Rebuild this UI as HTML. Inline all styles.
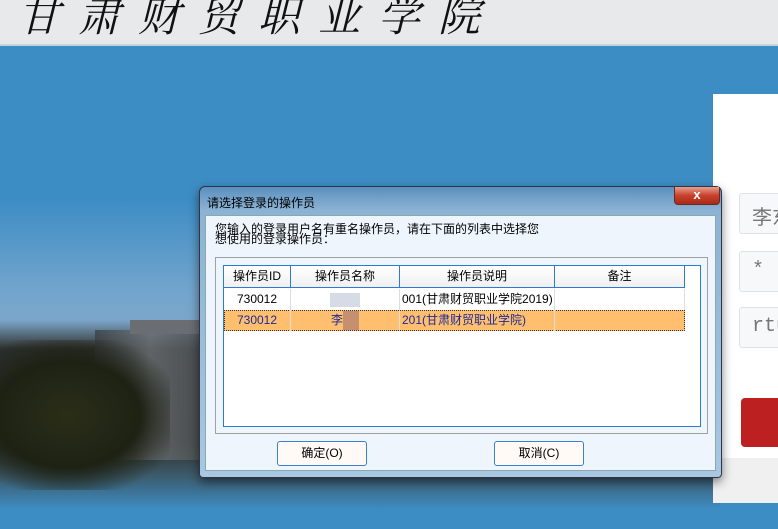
<!DOCTYPE html>
<html><head><meta charset="utf-8"><style>
*{margin:0;padding:0;box-sizing:border-box}
body{width:778px;height:529px;overflow:hidden;position:relative;background:#3d8dc5;font-family:"Liberation Sans","Noto Sans CJK SC","WenQuanYi Zen Hei",sans-serif;font-size:12px;color:#000}
.top{position:absolute;left:0;top:0;width:778px;height:46px;background:#e8e9ea;border-bottom:2px solid #c9d3dc}
.logo{position:absolute;left:18px;top:-16px;font-family:"Noto Serif CJK SC",serif;font-size:42px;letter-spacing:18px;color:#111;font-style:italic;white-space:nowrap}
.sky{position:absolute;left:0;top:200px;width:720px;height:150px;background:linear-gradient(180deg,rgba(61,141,197,0),rgba(150,180,210,.6) 60%,rgba(150,175,200,.8))}
.dark{position:absolute;left:0;top:320px;width:720px;height:190px;background:linear-gradient(180deg,rgba(40,40,38,.0) 0%,rgba(40,40,35,.92) 15%,rgba(45,42,32,.95) 65%,rgba(60,70,70,.7) 82%,rgba(61,141,197,1) 100%)}
.bldg{position:absolute;left:95px;top:330px;width:110px;height:130px;background:linear-gradient(90deg,#3a3e42,#707478 50%,#505458);opacity:.75}
.bldg2{position:absolute;left:130px;top:320px;width:80px;height:14px;background:#6a6e72}
.tree{position:absolute;left:0;top:340px;width:170px;height:150px;background:radial-gradient(ellipse at 40% 50%,#2a2e18,#1e2214 50%,rgba(30,36,24,0) 80%)}
.panel{position:absolute;left:713px;top:94px;width:65px;height:364px;background:#fff}
.panel2{position:absolute;left:713px;top:458px;width:65px;height:45px;background:#f0f0f0}
.inp{position:absolute;left:739px;width:60px;height:41px;border:1px solid #dfe3e8;border-radius:3px;background:#f7f8fa;font-size:20px;color:#777;padding:7px 12px;font-family:"Liberation Mono","Noto Sans CJK SC",monospace;white-space:nowrap;overflow:hidden}
.red{position:absolute;left:741px;top:398px;width:50px;height:49px;background:#bd2020;border-radius:4px}
.dlg{position:absolute;left:199px;top:186px;width:523px;height:292px;border:1px solid #334;border-radius:6px 6px 4px 4px;background:linear-gradient(180deg,#5b8fbf 0%,#8cb3d3 8%,#a8c7e2 100%);box-shadow:0 4px 10px rgba(0,0,0,.5)}
.title{position:absolute;left:7px;top:7px;font-size:12px;color:#000}
.close{position:absolute;left:474px;top:0;width:46px;height:18px;background:linear-gradient(180deg,#e8a090,#c7412c 50%,#a82a18);border:1px solid #6a2a20;border-top:none;border-radius:0 0 4px 4px;color:#fff;font-weight:bold;text-align:center;font-size:13px;line-height:16px}
.body{position:absolute;left:5px;top:28px;width:511px;height:256px;background:#eef5fc;border:1px solid #8aa;}
.msg{position:absolute;left:9px;top:8px;line-height:10px;font-size:12px}
.grp{position:absolute;left:9px;top:41px;width:493px;height:177px;border:1px solid #a0a0a0}
.list{position:absolute;left:7px;top:7px;width:478px;height:162px;border:1px solid #2c7bd2;background:#fff}
.hd{position:absolute;top:0;height:22px;background:linear-gradient(#fff,#f0f0f0);border-right:1px solid #2c7bd2;border-bottom:1px solid #2c7bd2;text-align:center;line-height:21px}
.c{position:absolute;height:21px;line-height:21px;border-right:1px solid #ddd;text-align:center;white-space:nowrap;overflow:hidden}
.sel{position:absolute;left:0;top:44px;width:461px;height:21px;background:#ffbf6e;border:1px dotted #333}
.btn{position:absolute;top:254px;width:90px;height:25px;border:1px solid #3b7fd0;border-radius:3px;background:#fffaf6;text-align:center;line-height:23px}
</style></head><body>
<div class="top"><div class="logo">甘肃财贸职业学院</div></div>
<div class="sky"></div>
<div class="dark"></div>
<div class="bldg"></div><div class="bldg2"></div>
<div class="tree"></div>
<div class="panel"></div><div class="panel2"></div>
<div class="inp" style="top:193px">李东</div>
<div class="inp" style="top:251px">*</div>
<div class="inp" style="top:307px">rtu</div>
<div class="red"></div>
<div class="dlg">
<div class="title">请选择登录的操作员</div>
<div class="close">x</div>
<div class="body">
<div class="msg">您输入的登录用户名有重名操作员，请在下面的列表中选择您<br>想使用的登录操作员：</div>
<div class="grp"><div class="list">
<div class="hd" style="left:0;width:67px">操作员ID</div>
<div class="hd" style="left:67px;width:109px">操作员名称</div>
<div class="hd" style="left:176px;width:155px">操作员说明</div>
<div class="hd" style="left:331px;width:130px">备注</div>
<div class="c" style="left:0;top:23px;width:67px">730012</div>
<div class="c" style="left:67px;top:23px;width:109px"><span style="display:inline-block;width:30px;height:14px;background:#d6dbe6;vertical-align:middle"></span></div>
<div class="c" style="left:176px;top:23px;width:155px;text-align:left;padding-left:2px">001(甘肃财贸职业学院2019)</div>
<div class="c" style="left:331px;top:23px;width:130px"></div>
<div class="sel"></div>
<div class="c" style="left:0;top:44px;width:67px;color:#1a2a9a">730012</div>
<div class="c" style="left:67px;top:44px;width:109px;color:#1a2a9a">李<span style="display:inline-block;width:16px;height:19px;background:#c49070;vertical-align:middle"></span></div>
<div class="c" style="left:176px;top:44px;width:155px;text-align:left;padding-left:2px;color:#1a2a9a">201(甘肃财贸职业学院)</div>
</div></div>
</div>
<div class="btn" style="left:77px">确定(O)</div>
<div class="btn" style="left:294px">取消(C)</div>
</div>
</body></html>
